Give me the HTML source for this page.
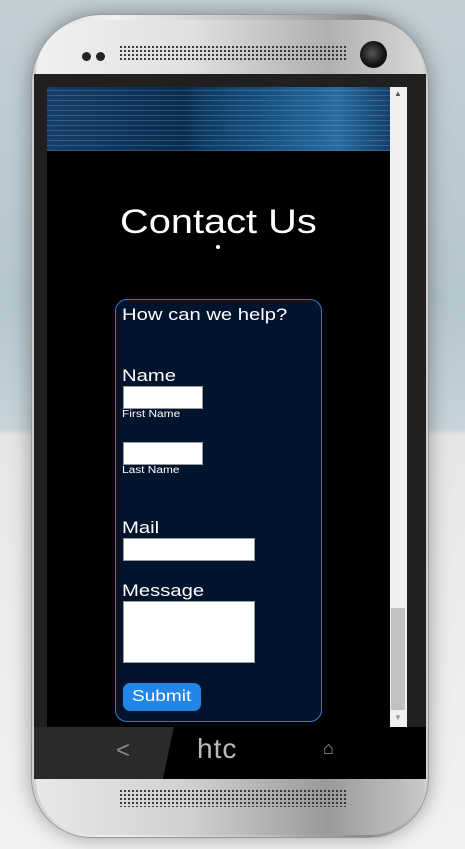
<!DOCTYPE html>
<html><head><style>
*{margin:0;padding:0;box-sizing:border-box}
body{width:465px;height:849px;overflow:hidden;position:relative;font-family:"Liberation Sans",sans-serif;
background:linear-gradient(180deg,#c3d0d6 0,#b4c6ce 300px,#c6d4da 428px,#e6e6e6 436px,#f2f2f2 849px);}
.abs{position:absolute}
.phone{left:31px;top:14px;width:398px;height:824px;border-radius:70px 70px 60px 60px;
background:linear-gradient(90deg,#cfcfcf,#f2f2f2 20%,#bcbcbc 60%,#8a8a8a 85%,#d0d0d0);box-shadow:0 0 20px rgba(0,0,0,.35);border:1px solid #999}
.screenblk{left:34px;top:74px;width:392px;height:705px;background:#202020}
.scr{left:47px;top:87px;width:343px;height:640px;background:#000;overflow:hidden}
.banner{left:47px;top:87px;width:343px;height:64px;
background:repeating-linear-gradient(0deg,rgba(120,190,240,.25) 0 1px,transparent 1px 5px),linear-gradient(90deg,#163f66 0,#0d3155 30%,#0a2b4c 40%,#0f3a62 45%,#1d5888 70%,#2a6a9e 85%,#153e66 100%)}
.sb{left:390px;top:87px;width:17px;height:640px;background:#f0f0f0}
.form{left:115px;top:299px;width:207px;height:423px;border:1px solid #2a7fd4;border-radius:12px;background:#02132e}
.t{color:#fff;position:absolute;white-space:nowrap;transform-origin:0 0;transform:scaleX(1.19)}
.in{position:absolute;background:#fff;border:1px solid #999}
</style></head><body>
<div class="abs phone"></div>
<div class="abs" style="left:36px;top:20px;width:388px;height:54px;border-radius:60px 60px 0 0;background:linear-gradient(90deg,#f0f0f0,#e0e0e0 40%,#b0b0b0 75%,#d8d8d8)"></div>
<div class="abs" style="left:119px;top:45px;width:228px;height:17px;background:radial-gradient(circle,#333 1px,transparent 1.3px) 0 0/4px 4px"></div>
<div class="abs" style="left:82px;top:52px;width:9px;height:9px;border-radius:50%;background:#222"></div>
<div class="abs" style="left:96px;top:52px;width:9px;height:9px;border-radius:50%;background:#222"></div>
<div class="abs" style="left:360px;top:41px;width:27px;height:27px;border-radius:50%;background:radial-gradient(circle at 45% 45%,#555,#111 60%)"></div>
<div class="abs screenblk"></div>
<div class="abs" style="left:34px;top:727px;width:392px;height:52px;background:#000"></div>
<div class="abs" style="left:34px;top:727px;width:140px;height:52px;background:#2a2a2a;clip-path:polygon(0 0,100% 0,92% 100%,0 100%)"></div>
<div class="t" style="left:116px;top:737px;color:#888;font-size:24px;transform:none">&lt;</div>
<div class="t" style="left:197px;top:733px;color:#bbb;font-size:28px;letter-spacing:1px;transform:none">htc</div>
<div class="t" style="left:323px;top:738px;color:#999;font-size:18px;transform:none">⌂</div>
<div class="abs" style="left:36px;top:779px;width:388px;height:56px;border-radius:0 0 55px 55px;background:linear-gradient(90deg,#e8e8e8,#d0d0d0 40%,#9a9a9a 75%,#c8c8c8)"></div>
<div class="abs" style="left:119px;top:789px;width:228px;height:18px;background:radial-gradient(circle,#333 1px,transparent 1.3px) 0 0/4px 4px"></div>
<div class="abs scr"></div>
<div class="abs banner"></div>
<div class="abs sb"><div class="abs" style="left:1px;top:521px;width:14px;height:102px;background:#c1c1c1"></div>
<div class="t" style="left:4px;top:2px;color:#555;font-size:8px;transform:none">▲</div><div class="t" style="left:4px;top:626px;color:#999;font-size:8px;transform:none">▼</div></div>
<div class="t" style="left:120px;top:203px;font-size:34px;transform:scaleX(1.17)">Contact Us</div>
<div class="abs" style="left:216px;top:245px;width:4px;height:4px;border-radius:50%;background:#fff"></div>
<div class="abs form"></div>
<div class="t" style="left:122px;top:305px;font-size:17px">How can we help?</div>
<div class="t" style="left:122px;top:366px;font-size:17px">Name</div>
<div class="in" style="left:123px;top:386px;width:80px;height:23px"></div>
<div class="t" style="left:122px;top:409px;font-size:10px">First Name</div>
<div class="in" style="left:123px;top:442px;width:80px;height:23px"></div>
<div class="t" style="left:122px;top:465px;font-size:10px">Last Name</div>
<div class="t" style="left:122px;top:518px;font-size:17px">Mail</div>
<div class="in" style="left:123px;top:538px;width:132px;height:23px"></div>
<div class="t" style="left:122px;top:581px;font-size:17px">Message</div>
<div class="in" style="left:123px;top:601px;width:132px;height:62px"></div>
<div class="abs" style="left:123px;top:683px;width:78px;height:28px;border-radius:7px;background:#2286e6"></div>
<div class="t" style="left:132px;top:688px;font-size:16px">Submit</div>
</body></html>
